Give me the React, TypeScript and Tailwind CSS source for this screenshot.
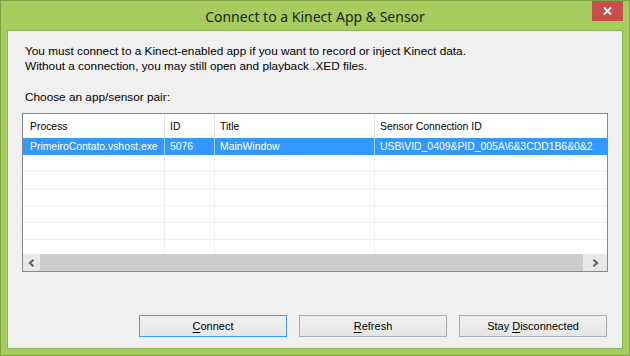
import React from "react";

const ui = { fontFamily: '"Liberation Sans", Arial, sans-serif' };

const cols = [
  { key: "process", label: "Process", w: "w-[142px]", pad: "pl-[7px]" },
  { key: "id", label: "ID", w: "w-[50px]", pad: "pl-[5px]" },
  { key: "title", label: "Title", w: "w-[160px]", pad: "pl-[5px]" },
  { key: "sensor", label: "Sensor Connection ID", w: "flex-1", pad: "pl-[5px]" },
];

const row = {
  process: "PrimeiroContato.vshost.exe",
  id: "5076",
  title: "MainWindow",
  sensor: "USB\\VID_0409&PID_005A\\6&3CDD1B6&0&2",
};

function WinButton({
  children,
  focused,
}: {
  children: React.ReactNode;
  focused?: boolean;
}) {
  return (
    <button
      className={
        "h-[22px] w-[148px] border bg-gradient-to-b from-[#f0f0f0] to-[#e5e5e5] text-[11px] text-black " +
        (focused ? "border-[#3c9bff]" : "border-[#acacac]")
      }
      style={ui}
    >
      {children}
    </button>
  );
}

export default function App() {
  return (
    <div className="flex h-[356px] w-[630px] flex-col border border-[#7ea446] bg-[#a5cc5d]">
      {/* title bar */}
      <div className="relative flex h-[29px] items-center justify-center">
        <span
          className="pt-[2px] text-[14px] text-[#1e1e1e]"
          style={{ fontFamily: '"Noto Sans", "Open Sans", sans-serif' }}
        >
          Connect to a Kinect App &amp; Sensor
        </span>
        <div className="absolute right-[6px] top-0 flex h-[20px] w-[31px] items-center justify-center bg-[#c74f4e]">
          <svg width="9" height="8" viewBox="0 0 9 8">
            <path d="M1 0.5 L8 7.5 M8 0.5 L1 7.5" stroke="#fff" strokeWidth="1.8" />
          </svg>
        </div>
      </div>

      {/* client area */}
      <div className="mx-[6px] mb-[6px] flex flex-1 flex-col border border-[#8bb156] bg-[#f0f0f0]">
        <div className="pl-[17px] pt-[13px] text-[11.8px] leading-[15px] text-black" style={ui}>
          <p>You must connect to a Kinect-enabled app if you want to record or inject Kinect data.</p>
          <p>Without a connection, you may still open and playback .XED files.</p>
          <p className="mt-[16px]">Choose an app/sensor pair:</p>
        </div>

        {/* list view */}
        <div className="ml-[14px] mt-[8px] flex h-[159px] w-[586px] flex-col border border-[#828790] bg-white" style={ui}>
          <div className="flex h-[24px] text-[10.4px] text-black">
            {cols.map((c, i) => (
              <div
                key={c.key}
                className={
                  c.w + " " + c.pad + " flex items-center pt-[1px] " + (i < 3 ? "border-r border-[#e5e5e5]" : "")
                }
              >
                {c.label}
              </div>
            ))}
          </div>
          <div className="flex h-[17px] bg-[#3399ff] text-[10.4px] text-white">
            {cols.map((c, i) => (
              <div
                key={c.key}
                className={
                  c.w + " " + c.pad + " flex items-center whitespace-nowrap overflow-hidden " + (i < 3 ? "border-r border-[#a9d1ff]" : "")
                }
              >
                {row[c.key as keyof typeof row]}
              </div>
            ))}
          </div>
          <div className="flex-1 overflow-hidden">
            {[0, 1, 2, 3, 4, 5].map((r) => (
              <div key={r} className="flex h-[17px] border-b border-[#f0f0f0]">
                {cols.map((c, i) => (
                  <div key={c.key} className={c.w + " " + (i < 3 ? "border-r border-[#f0f0f0]" : "")} />
                ))}
              </div>
            ))}
          </div>
          {/* horizontal scrollbar */}
          <div className="flex h-[17px] bg-[#e8e8e8]">
            <div className="flex w-[17px] items-center justify-center">
              <svg width="7" height="8" viewBox="0 0 7 8">
                <path d="M5.5 0.8 L1.8 4 L5.5 7.2" fill="none" stroke="#606060" strokeWidth="2" />
              </svg>
            </div>
            <div className="h-full flex-1 bg-[#cdcdcd]" />
            <div className="flex w-[24px] items-center justify-center">
              <svg width="7" height="8" viewBox="0 0 7 8">
                <path d="M1.5 0.8 L5.2 4 L1.5 7.2" fill="none" stroke="#606060" strokeWidth="2" />
              </svg>
            </div>
          </div>
        </div>

        <div className="mr-[15px] mt-[43px] flex justify-end gap-[12px]">
          <WinButton focused>
            <u className="underline-offset-2">C</u>onnect
          </WinButton>
          <WinButton>
            <u className="underline-offset-2">R</u>efresh
          </WinButton>
          <WinButton>
            Stay <u className="underline-offset-2">D</u>isconnected
          </WinButton>
        </div>
      </div>
    </div>
  );
}
